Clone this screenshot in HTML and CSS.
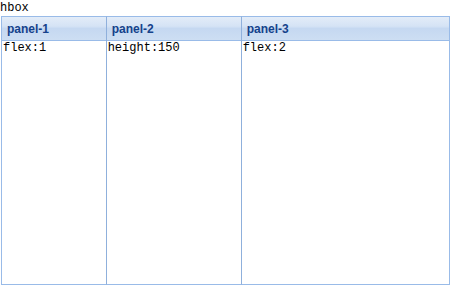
FILE: index.html
```html
<!DOCTYPE html>
<html lang="en">
<head>
    <meta charset="UTF-8">
    <title>hbox</title>
    <link rel="stylesheet" href="styles.css">
</head>
<body>
    <div class="title">hbox</div>

    <!-- hbox container -->
    <div class="hbox">
        <div class="panel panel-1">
            <div class="panel-header">panel-1</div>
            <div class="panel-body">flex:1</div>
        </div>
        <div class="panel panel-2">
            <div class="panel-header">panel-2</div>
            <div class="panel-body">height:150</div>
        </div>
        <div class="panel panel-3">
            <div class="panel-header">panel-3</div>
            <div class="panel-body">flex:2</div>
        </div>
    </div>
</body>
</html>
```

FILE: styles.css
```css
body {
    margin: 0;
    font-family: "Liberation Mono", "DejaVu Sans Mono", monospace;
    font-size: 12px;
    line-height: 15px;
    color: #000;
    background: #fff;
}

.title {
    padding-top: 1px;
    height: 15px;
}

.hbox {
    display: flex;
    width: 449px;
    height: 269px;
    margin-left: 1px;
    box-sizing: border-box;
    border-left: 1px solid #99bbe8;
}

.panel {
    display: flex;
    flex-direction: column;
    box-sizing: border-box;
    border-top: 1px solid #99bbe8;
    border-bottom: 1px solid #99bbe8;
    border-right: 1px solid #99bbe8;
    min-width: 0;
}

.panel-1 {
    flex: 1 1 0;
    border-right-color: #8fb0dc;
}

.panel-2 {
    flex: 0 0 135px;
    border-right-color: #8fb0dc;
}

.panel-3 {
    flex: 2 1 0;
}

.panel-header {
    height: 24px;
    box-sizing: border-box;
    padding: 5px 5px 0;
    border-bottom: 1px solid #99bbe8;
    background: linear-gradient(to bottom, #e3ecf8 0%, #d5e3f5 40%, #c5d8f1 50%, #cddef3 100%);
    font-family: "Liberation Sans", Arial, sans-serif;
    font-size: 12px;
    font-weight: bold;
    line-height: 14px;
    color: #15428b;
}

.panel-body {
    flex: 1;
    padding: 0 1px;
    background: #fff;
    white-space: nowrap;
}
```
